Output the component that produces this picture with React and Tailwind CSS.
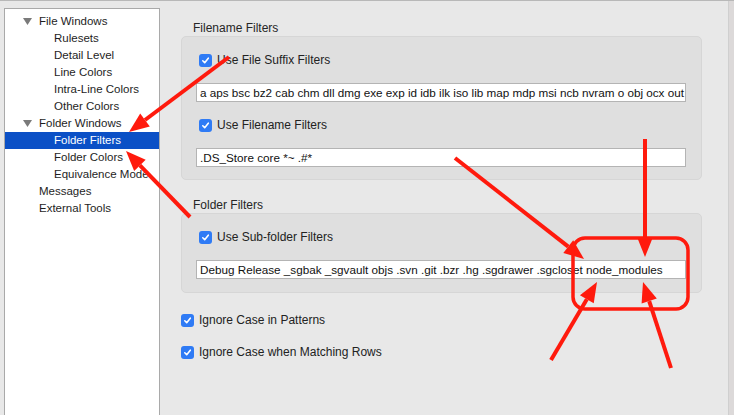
import React from "react";

const treeItems = [
  { label: "File Windows", level: 0, open: true },
  { label: "Rulesets", level: 1 },
  { label: "Detail Level", level: 1 },
  { label: "Line Colors", level: 1 },
  { label: "Intra-Line Colors", level: 1 },
  { label: "Other Colors", level: 1 },
  { label: "Folder Windows", level: 0, open: true },
  { label: "Folder Filters", level: 1, selected: true },
  { label: "Folder Colors", level: 1 },
  { label: "Equivalence Mode", level: 1 },
  { label: "Messages", level: 0 },
  { label: "External Tools", level: 0 },
];

const Checkbox = () => (
  <span className="flex h-[13px] w-[13px] shrink-0 items-center justify-center rounded-[3px] bg-[#2f7bf5]">
    <svg width="9" height="9" viewBox="0 0 9 9" fill="none">
      <path d="M1.8 4.8 L3.7 6.7 L7.3 2.2" stroke="white" strokeWidth="1.6" strokeLinecap="round" strokeLinejoin="round" />
    </svg>
  </span>
);

const CheckRow = ({ label, className = "" }) => (
  <div className={`flex h-[16px] items-center gap-[5px] ${className}`}>
    <Checkbox />
    <span className="text-[12px] leading-[16px] text-[#222]">{label}</span>
  </div>
);

const TextField = ({ value }) => (
  <div className="h-[19px] w-[490px] overflow-hidden whitespace-nowrap border border-[#b4b4b4] bg-white pl-[3px] text-[11.7px] leading-[17px] text-[#111]">
    {value}
  </div>
);

// red annotation arrow: line plus filled head at the tip
const Arrow = ({ x1, y1, x2, y2 }) => {
  const a = Math.atan2(y2 - y1, x2 - x1);
  const len = 20;
  const w = 8;
  const bx = x2 - len * Math.cos(a);
  const by = y2 - len * Math.sin(a);
  const px = -Math.sin(a) * w;
  const py = Math.cos(a) * w;
  return (
    <g>
      <line x1={x1} y1={y1} x2={bx} y2={by} stroke="#ff1a0d" strokeWidth="4" />
      <polygon points={`${x2},${y2} ${bx + px},${by + py} ${bx - px},${by - py}`} fill="#ff1a0d" />
    </g>
  );
};

const App = () => {
  return (
    <div
      className="relative flex h-[415px] w-[734px] overflow-hidden border-t border-[#b8b8b8] bg-[#e8e8e8]"
      style={{ fontFamily: "'Liberation Sans', Arial, sans-serif" }}
    >
      {/* sidebar tree */}
      <div className="ml-[4px] mt-[7px] w-[156px] shrink-0 border-x border-t border-[#a9a9a9] bg-white pt-[4px]">
        {treeItems.map((item) => (
          <div
            key={item.label}
            className={`flex h-[17px] items-center whitespace-nowrap text-[11.5px] ${
              item.selected ? "bg-[#0b50c6] text-white" : "text-[#1e1e1e]"
            }`}
          >
            <span className="flex w-[34px] shrink-0 justify-end pr-[7px]">
              {item.open && (
                <svg width="9" height="7" viewBox="0 0 9 7">
                  <polygon points="0,0 9,0 4.5,7" fill="#7a7a7a" />
                </svg>
              )}
            </span>
            <span className={item.level === 1 ? "pl-[15px]" : ""}>{item.label}</span>
          </div>
        ))}
      </div>

      {/* settings panel */}
      <div className="flex flex-1 flex-col pl-[21px] pt-[20px]">
        <div className="pl-[12px] text-[12px] leading-[15px] text-[#262626]">Filename Filters</div>
        <div className="flex h-[144px] w-[521px] flex-col rounded-[5px] border border-[#d6d6d6] bg-[#dfdfdf] pl-[14px] pt-[15px]">
          <CheckRow label="Use File Suffix Filters" className="pl-[3px]" />
          <div className="mt-[15px]">
            <TextField value="a aps bsc bz2 cab chm dll dmg exe exp id idb ilk iso lib map mdp msi ncb nvram o obj ocx out pch pdb pdf" />
          </div>
          <CheckRow label="Use Filename Filters" className="mt-[15px] pl-[3px]" />
          <div className="mt-[15px]">
            <TextField value=".DS_Store core *~ .#*" />
          </div>
        </div>

        <div className="mt-[18px] pl-[12px] text-[12px] leading-[15px] text-[#262626]">Folder Filters</div>
        <div className="flex h-[80px] w-[521px] flex-col rounded-[5px] border border-[#d6d6d6] bg-[#dfdfdf] pl-[14px] pt-[15px]">
          <CheckRow label="Use Sub-folder Filters" className="pl-[3px]" />
          <div className="mt-[15px]">
            <TextField value="Debug Release _sgbak _sgvault objs .svn .git .bzr .hg .sgdrawer .sgcloset node_modules" />
          </div>
        </div>

        <CheckRow label="Ignore Case in Patterns" className="mt-[19px]" />
        <CheckRow label="Ignore Case when Matching Rows" className="mt-[16px]" />
      </div>

      {/* right window edge */}
      <div className="w-[6px] shrink-0 border-l border-[#cfcfcf] bg-[#dcd9d9]" />

      {/* red annotations */}
      <svg className="pointer-events-none absolute left-0 top-0" width="734" height="415" viewBox="0 0 734 415">
        <Arrow x1={229} y1={56} x2={129} y2={131} />
        <Arrow x1={190} y1={216} x2={126} y2={150} />
        <Arrow x1={455} y1={157} x2={584} y2={258} />
        <Arrow x1={645} y1={138} x2={645} y2={256} />
        <Arrow x1={551} y1={359} x2={597} y2={281} />
        <Arrow x1={671} y1={367} x2={643} y2={281} />
        <rect x="573" y="237" width="115" height="71" rx="12" fill="none" stroke="#ff1a0d" strokeWidth="3.5" />
      </svg>
    </div>
  );
};

export default App;
